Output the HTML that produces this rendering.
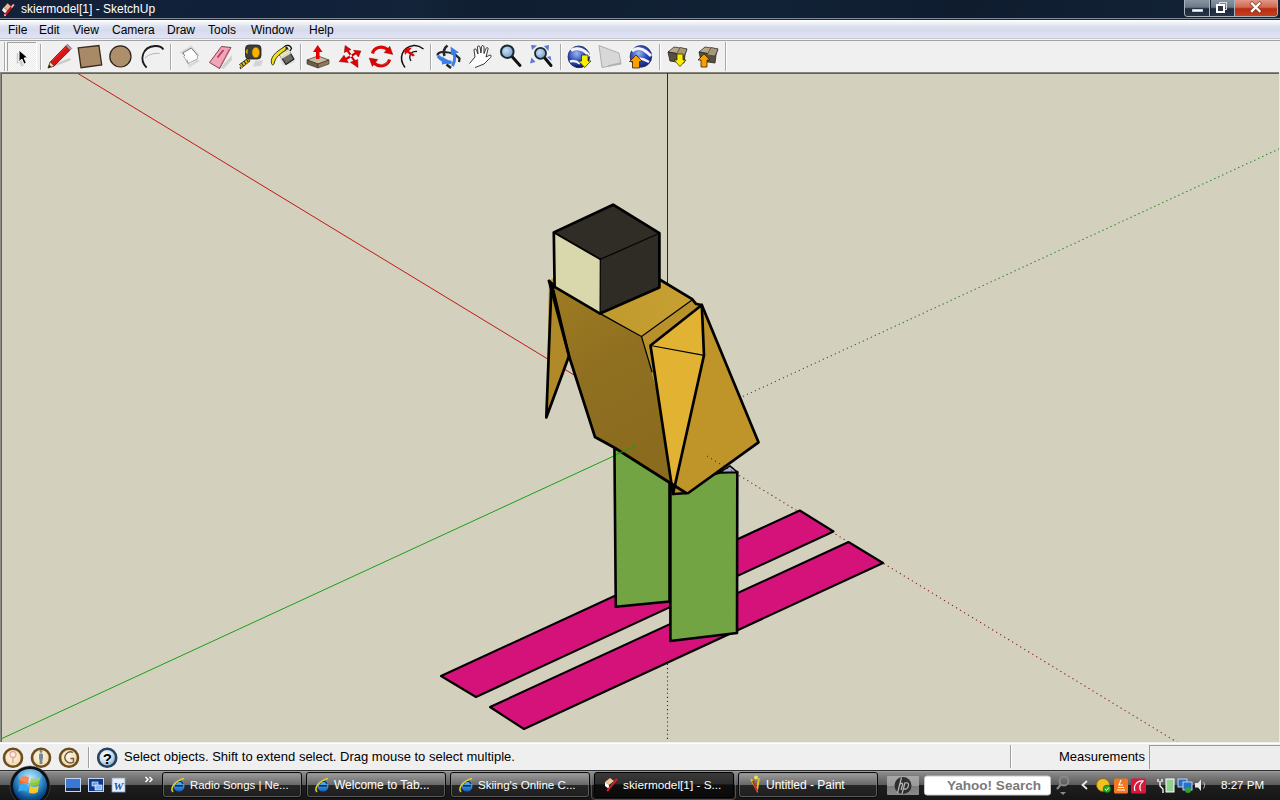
<!DOCTYPE html>
<html><head><meta charset="utf-8">
<style>
*{margin:0;padding:0;box-sizing:border-box}
html,body{width:1280px;height:800px;overflow:hidden;background:#f0f0f0}
body{position:relative;font-family:"Liberation Sans",sans-serif}
.a{position:absolute}
#title{left:0;top:0;width:1280px;height:18px;background:linear-gradient(100deg,#142238 0%,#10203a 20%,#132338 33%,#0f1e30 38%,#122236 60%,#0e1c2e 75%,#142438 100%)}
#tline1{left:0;top:18px;width:1280px;height:1px;background:#7f8b97}
#tline2{left:0;top:19px;width:1280px;height:1px;background:#1e2630}
#menu{left:0;top:20px;width:1280px;height:18px;background:linear-gradient(180deg,#ffffff 0%,#f4f5fa 12%,#dde2ee 35%,#d6dbec 55%,#dcdff2 80%,#e2e3f4 100%)}
#menu span{position:absolute;top:3px;font-size:12px;color:#000;line-height:14px}
#mline1{left:0;top:38px;width:1280px;height:1px;background:#c5c9d2}
#mline2{left:0;top:39px;width:1280px;height:1px;background:#f5f5f5}
#mline3{left:0;top:40px;width:1280px;height:1px;background:#a3a3a3}
#vp{left:0;top:72px;width:1280px;height:670px}
#status{left:0;top:742px;width:1280px;height:28px;background:#efefef}
#taskbar{left:0;top:770px;width:1280px;height:30px;background:linear-gradient(180deg,#2e2e2e 0px,#2e2e2e 1px,#9c9c9c 1px,#9c9c9c 2px,#8c8c8c 2px,#747474 8px,#5c5c5c 14.5px,#1e1e1e 15px,#161616 30px)}
</style></head><body>
<div class="a" id="title">
<svg class="a" style="left:0;top:0" width="18" height="18" viewBox="0 0 18 18">
<polygon points="7.5,3 11.5,6.5 7.5,11 3.5,7.5" fill="#f0b890" stroke="#1a1a1a" stroke-width="0.6"/>
<polygon points="3.5,7.5 7.5,11 5.5,13.8 2,10.2" fill="#f4f4ec"/>
<line x1="5" y1="15" x2="13.8" y2="4.5" stroke="#c81818" stroke-width="2.2"/>
<line x1="11.5" y1="7.5" x2="13.8" y2="4.5" stroke="#f0c8d0" stroke-width="1.4"/>
<circle cx="5" cy="15.2" r="1.1" fill="#f090b0"/>
</svg>
<span class="a" style="left:21px;top:2px;font-size:12px;line-height:14px;color:#fff;white-space:nowrap">skiermodel[1] - SketchUp</span>
<div class="a" style="left:1184px;top:0;width:94px;height:17px;border:1px solid #aab4c0;border-top:none;border-radius:0 0 4px 4px;overflow:hidden">
 <div class="a" style="left:0;top:0;width:25px;height:16px;background:linear-gradient(180deg,#8a95a3 0%,#6c7888 45%,#1c2a3a 55%,#26354a 100%);border-right:1px solid #aab4c0"></div>
 <div class="a" style="left:7px;top:9px;width:11px;height:3px;background:#fff;border:1px solid #c0c8d0"></div>
 <div class="a" style="left:26px;top:0;width:24px;height:16px;background:linear-gradient(180deg,#8a95a3 0%,#6c7888 45%,#1c2a3a 55%,#26354a 100%);border-right:1px solid #aab4c0"></div>
 <div class="a" style="left:34px;top:2px;width:8px;height:8px;border:1.5px solid #d8dce0"></div>
 <div class="a" style="left:31px;top:4px;width:9px;height:9px;border:2.5px solid #fff;background:#2a3440"></div>
 <div class="a" style="left:50px;top:0;width:44px;height:16px;background:linear-gradient(180deg,#e09888 0%,#d06850 45%,#b82c10 55%,#c84020 100%)"></div>
 <svg class="a" style="left:64px;top:1px" width="14" height="12" viewBox="0 0 14 12"><path d="M3,2.5 L10.5,10 M10.5,2.5 L3,10" stroke="#7a3020" stroke-width="3.6" stroke-linecap="square"/><path d="M3,2.5 L10.5,10 M10.5,2.5 L3,10" stroke="#fff" stroke-width="2.4" stroke-linecap="square"/></svg>
</div>
</div>
<div class="a" id="tline1"></div>
<div class="a" id="tline2"></div>
<div class="a" id="menu">
<span style="left:8px">File</span>
<span style="left:39px">Edit</span>
<span style="left:73px">View</span>
<span style="left:112px">Camera</span>
<span style="left:167px">Draw</span>
<span style="left:208px">Tools</span>
<span style="left:251px">Window</span>
<span style="left:309px">Help</span>
</div>
<div class="a" id="mline1"></div>
<div class="a" id="mline2"></div>
<div class="a" id="mline3"></div>
<svg class="a" id="toolbar" style="left:0;top:41px" width="1280" height="31" viewBox="0 41 1280 31">
<defs>
<pattern id="chk" width="2" height="2" patternUnits="userSpaceOnUse"><rect width="2" height="2" fill="#fbfbfb"/><rect width="1" height="1" fill="#ececec"/><rect x="1" y="1" width="1" height="1" fill="#ececec"/></pattern>
<radialGradient id="earth" cx="0.4" cy="0.35" r="0.7"><stop offset="0" stop-color="#9ab8f0"/><stop offset="0.5" stop-color="#3050c0"/><stop offset="1" stop-color="#101c70"/></radialGradient>
<radialGradient id="lens" cx="0.4" cy="0.4" r="0.6"><stop offset="0" stop-color="#c8e0f8"/><stop offset="1" stop-color="#7aa0c8"/></radialGradient>
</defs>
<rect x="0" y="41" width="1280" height="31" fill="#f0f0f0"/>
<rect x="4" y="42" width="1" height="29" fill="#a8a8a8"/>
<rect x="5" y="42" width="1" height="29" fill="#fff"/>
<!-- select pressed -->
<rect x="7" y="42" width="30" height="29" fill="url(#chk)"/>
<rect x="7" y="42" width="30" height="1" fill="#a0a0a0"/>
<rect x="7" y="42" width="1" height="29" fill="#a0a0a0"/>
<rect x="36" y="42" width="1" height="29" fill="#fff"/>
<!-- separators -->
<g fill="#a8a8a8"><rect x="40" y="44" width="1" height="26"/><rect x="170" y="44" width="1" height="26"/><rect x="300" y="44" width="1" height="26"/><rect x="430" y="44" width="1" height="26"/><rect x="560" y="44" width="1" height="26"/><rect x="659" y="44" width="1" height="26"/><rect x="725" y="42" width="1" height="29"/></g>
<g fill="#fff"><rect x="41" y="44" width="1" height="26"/><rect x="171" y="44" width="1" height="26"/><rect x="301" y="44" width="1" height="26"/><rect x="431" y="44" width="1" height="26"/><rect x="561" y="44" width="1" height="26"/><rect x="660" y="44" width="1" height="26"/><rect x="726" y="42" width="1" height="29"/></g>
<!-- cursor -->
<path d="M18,51.5 L18,63 L20.5,61 L22.5,65.5 L25,64.5 L23,60 L26.5,59.5 Z" fill="#888" opacity="0.35" transform="translate(-1.2,1)"/>
<path d="M19,50 L19,61.8 L21.8,59 L24,64.2 L26.4,63.1 L24.2,58 L27.8,57.8 Z" fill="#000" stroke="#fff" stroke-width="1" stroke-linejoin="miter"/>
<!-- pencil -->
<path d="M51,66.5 L69.5,59.5" stroke="#a8a8a8" stroke-width="2.2" opacity="0.55" stroke-linecap="round"/>
<path d="M48,68 L50.2,62 L65.8,46 L70,50.2 L54,66 Z" fill="#d81414" stroke="#5a0000" stroke-width="0.7"/>
<path d="M52,61 L66.5,47" stroke="#ff5050" stroke-width="0.8" opacity="0.7"/>
<path d="M48,68 L50.2,62 L54,66 Z" fill="#ecd8a8" stroke="#5a4020" stroke-width="0.5"/>
<path d="M48,68 L49.2,64.8 L51.2,66.8 Z" fill="#111"/>
<path d="M65.8,46 L67.5,44.3 L71.7,48.5 L70,50.2 Z" fill="#c890a8" stroke="#604050" stroke-width="0.6"/>
<!-- rectangle -->
<polygon points="78.2,47.8 98.9,45.5 101.7,65 81,67.7" fill="#a88a68" stroke="#3a2a1a" stroke-width="1.3"/>
<!-- circle -->
<circle cx="120.4" cy="56.4" r="10.6" fill="#ae8f6c" stroke="#2e2216" stroke-width="1.2"/>
<!-- arc -->
<path d="M146.6,67.7 C139,60 142,47 155,46 C159,45.8 162,47 163.4,49.5" fill="none" stroke="#1a1a1a" stroke-width="1.8"/>
<path d="M145,58 C149,54 155,53 159.5,53.5" fill="none" stroke="#9a9a9a" stroke-width="0.7"/>
<!-- make component (box) -->
<g fill="none" stroke="#c8c8c8" stroke-width="2.2" opacity="0.6"><polygon points="181.5,52.5 191.3,47 198,55 187.5,61 189.5,66 197.5,61"/></g>
<polygon points="182.9,52.8 191.3,48.1 197.4,55.1 187.1,59.8" fill="#fff" stroke="#6a6a6a" stroke-width="0.9"/>
<polyline points="183.5,56 188,63.5 197.5,59 197.4,55.1" fill="#fafafa" stroke="#9a9a9a" stroke-width="0.8"/>
<line x1="187.1" y1="59.8" x2="188" y2="63.5" stroke="#8a8a8a" stroke-width="0.8"/>
<!-- eraser -->
<polygon points="221,67.5 231.5,55 232,60 223.5,69" fill="#a8a8a8" opacity="0.45"/>
<polygon points="209.5,62.5 221.5,46.5 231,47.5 219.5,68.5" fill="#f2a4b8" stroke="#7a3048" stroke-width="0.9" stroke-linejoin="round"/>
<line x1="229.5" y1="49" x2="219.5" y2="68.5" stroke="#8a3a50" stroke-width="1"/>
<polygon points="229.5,49 231,47.5 219.5,68.5 220,66" fill="#c87890"/>
<path d="M217.5,57.5 L223.5,50" stroke="#b03858" stroke-width="1.6"/>
<!-- tape -->
<polygon points="255,61 263,60 261,66 253,66.5" fill="#b8b8b8" opacity="0.5"/>
<polygon points="239.5,64.5 248,58 250,61 242,67.5" fill="#e8c000" stroke="#222" stroke-width="0.8"/>
<path d="M241.5,63 L243.5,66 M244,61 L246,64 M246.5,59.2 L248.3,62" stroke="#222" stroke-width="1.1"/>
<path d="M240,67 L241,69" stroke="#222" stroke-width="1.3"/>
<rect x="245.5" y="45" width="15.5" height="14" rx="3.5" fill="#3c3e3c" stroke="#1a1a1a" stroke-width="0.8"/>
<ellipse cx="255.8" cy="52.5" rx="3.8" ry="5.2" fill="#f8b400" stroke="#8a6000" stroke-width="0.6"/>
<path d="M247.5,48.5 C245,50 245,53 247.5,54.5" fill="#e8c000" stroke="#222" stroke-width="0.6"/>
<!-- paint bucket -->
<polygon points="283,66 295,62 292,55 280,59" fill="#c0c0b8" opacity="0.45"/>
<path d="M278,52.5 L287,47.5 L294,59 L286,64.5 Z" fill="#6a6a66" stroke="#1e1e1e" stroke-width="1.1"/>
<path d="M279,54 L288.5,49 L291,53.5 L281.5,59 Z" fill="#ddd8b8"/>
<path d="M281,56 L290,51" stroke="#f4f0d8" stroke-width="0.9"/>
<path d="M283.5,49.5 C284,45 290,43.5 291.5,48.5 L290,51" fill="none" stroke="#111" stroke-width="1.3"/>
<path d="M286,45.5 L278,51 C273,55 270.5,59 271.5,63.5 C272.5,66 274,65 274.5,62 C276,57 280,53.5 286,50 Z" fill="#f0e010" stroke="#222" stroke-width="0.9"/>
<!-- push pull -->
<polygon points="307,60 318,56 329,60 318,64" fill="#c8bca0" stroke="#4a3c2c" stroke-width="0.8"/>
<polygon points="307,60 318,64 318,68 307,64" fill="#6e5e48" stroke="#3a2c1c" stroke-width="0.6"/>
<polygon points="318,64 329,60 329,64 318,68" fill="#8a7a60" stroke="#3a2c1c" stroke-width="0.6"/>
<polygon points="317.7,45 322.5,52 319.5,52 319.5,59 316,59 316,52 313,52" fill="#e00000"/>
<!-- move -->
<g fill="#e80000" stroke="#700" stroke-width="0.5" stroke-linejoin="round">
<polygon points="345.1,45.5 344.4,52.5 351,49.6"/>
<polygon points="360.9,51 353.5,50.3 358.4,57"/>
<polygon points="339.2,61.6 344,55.3 348.3,62.6"/>
<polygon points="358,67.5 350.4,62.3 357.7,59.5"/>
</g>
<g stroke="#d00000" stroke-width="2.2">
<line x1="347.5" y1="50.5" x2="354.5" y2="61"/>
<line x1="356" y1="53" x2="346" y2="59"/>
</g>
<circle cx="350.8" cy="55.8" r="1.2" fill="#fff"/>
<!-- rotate -->
<path d="M372.5,53.5 C374,47.5 382,45 387.5,49.5" fill="none" stroke="#d80808" stroke-width="3.2"/>
<polygon points="389.8,46.2 392.8,54.4 384.2,52.6" fill="#e00000" stroke="#700" stroke-width="0.4"/>
<path d="M389.6,59.5 C388,65.5 380,68 374.5,63.5" fill="none" stroke="#d80808" stroke-width="3.2"/>
<polygon points="369.2,58 377.8,59.5 372.3,66.4" fill="#e00000" stroke="#700" stroke-width="0.4"/>
<path d="M376,62 C380,65 384,65 388,62" fill="none" stroke="#b0a8a0" stroke-width="0.8" opacity="0.6"/>
<!-- follow me -->
<path d="M405,67.5 C398,58 402,47 414,45.5 C418,45.2 421,47 423.5,49" fill="none" stroke="#111" stroke-width="1.5"/>
<path d="M411,61 C408,56 411,51 417,51.5" fill="none" stroke="#111" stroke-width="1.3"/>
<polygon points="404,49 412,47.5 409,51 415,55 413,56.5 407,52.5 405,55" fill="#e00000"/>
<!-- orbit -->
<path d="M437.5,55.5 C437,51 447,51 455,54.5 L459.5,58.5 L459,62" fill="none" stroke="#1c2230" stroke-width="2.2"/>
<path d="M447.5,45.5 C443.5,48.5 443.5,53 444.5,56" fill="none" stroke="#2a2a2a" stroke-width="2.6"/>
<path d="M438,56 C441,60 446,62 451.5,62.5" fill="none" stroke="#3a7ee8" stroke-width="3.4"/>
<polygon points="441.5,56.5 452.5,62.5 442,64.5" fill="#3a7ee8"/>
<path d="M452,50 C455.5,54 455.5,60.5 452.5,66" fill="none" stroke="#3a7ee8" stroke-width="3"/>
<polygon points="450.5,46.5 459,52.5 451,54.5" fill="#3a7ee8"/>
<path d="M446.5,64.5 L451,68" fill="none" stroke="#222" stroke-width="2.6"/>
<!-- hand -->
<path d="M469.5,63.5 L475,57 L474,50 C474,48.5 476,48.5 476.5,50 L478,54 L477.5,47 C477.5,45.5 479.5,45.5 480,47 L481,53 L481.5,46.5 C482,45 484,45.5 484,47 L484,53.5 L486,48.5 C486.5,47 488.5,47.5 488,49 L486,57 L490,55 C491.5,55 491.5,56.5 490.5,57.5 L484,64 L475,67.5" fill="#fff" stroke="#222" stroke-width="0.9" stroke-linejoin="round"/>
<!-- zoom -->
<line x1="511.5" y1="56" x2="520" y2="65.5" stroke="#111" stroke-width="3" stroke-linecap="round"/>
<circle cx="507.3" cy="51.7" r="6.3" fill="url(#lens)" stroke="#1a2a30" stroke-width="2"/>
<!-- zoom extents -->
<line x1="544" y1="57" x2="551" y2="65.5" stroke="#111" stroke-width="3" stroke-linecap="round"/>
<circle cx="540.5" cy="53.3" r="5.5" fill="url(#lens)" stroke="#1a2a30" stroke-width="1.8"/>
<g fill="#5a7ad8">
<polygon points="531,45 537,45.5 532,50"/>
<polygon points="549,45 548.5,51 544,46"/>
<polygon points="530,63.5 531.5,57.5 535.5,62"/>
<polygon points="551.5,61 547,57 550.5,56"/>
</g>
<!-- earth get -->
<circle cx="578.8" cy="56.8" r="10.8" fill="url(#earth)" stroke="#2a2a50" stroke-width="0.8"/>
<path d="M571,50.5 C575,47.5 581,48.5 585,51.5 C587,53 588.5,55 589,56.5" fill="none" stroke="#f4f4ff" stroke-width="3"/>
<path d="M570,61.5 C573,60.5 577,61.5 580,63.5" fill="none" stroke="#f0f0ff" stroke-width="2.4"/>
<path d="M575,66 C578,67 581,67 583,66.5" fill="none" stroke="#101860" stroke-width="1.5"/>
<polygon points="581.5,55 588,55 588,61 591,61 584.7,67.5 578.5,61 581.5,61" fill="#f8f000" stroke="#303000" stroke-width="0.8"/>
<!-- terrain (disabled) -->
<polygon points="599,45.5 619,53 621,64 602,67.5" fill="#d8d8d8" stroke="#a8a8a8" stroke-width="0.9"/>
<path d="M608,66 L621,63" stroke="#b0b0b0" stroke-width="1.5"/>
<!-- earth place -->
<circle cx="640.9" cy="56.4" r="10.8" fill="url(#earth)" stroke="#2a2a50" stroke-width="0.8"/>
<path d="M632,51 C636,47.5 642,48 646,51.5 C648,53 650,55 651,56" fill="none" stroke="#f4f4ff" stroke-width="3"/>
<path d="M637,59 C641,58 645,59.5 649,62" fill="none" stroke="#f0f0ff" stroke-width="2.4"/>
<polygon points="636,55 642.5,61.5 639.5,61.5 639.5,68 632.5,68 632.5,61.5 629.5,61.5" fill="#f8a000" stroke="#402000" stroke-width="0.8"/>
<!-- warehouse get -->
<polygon points="668,52 674,47 687,49 685,55" fill="#b8a888" stroke="#333" stroke-width="0.8"/>
<polygon points="668,52 685,55 684,63 670,61" fill="#5a5040" stroke="#222" stroke-width="0.8"/>
<polygon points="676,55 680,47.5 687,49 684,56" fill="#a89878" stroke="#333" stroke-width="0.6"/>
<polygon points="677,54 683,54 683,60 686,60 680,66.5 674,60 677,60" fill="#f8f000" stroke="#303000" stroke-width="0.8"/>
<!-- share -->
<polygon points="699,52 705,47 718,49 716,55" fill="#b8a888" stroke="#333" stroke-width="0.8"/>
<polygon points="699,52 716,55 715,63 701,61" fill="#5a5040" stroke="#222" stroke-width="0.8"/>
<polygon points="707,55 711,47.5 718,49 715,56" fill="#a89878" stroke="#333" stroke-width="0.6"/>
<polygon points="704,54 710,60 707,60 707,67 701,67 701,60 698,60" fill="#f8a000" stroke="#402000" stroke-width="0.8"/>
</svg>

<svg class="a" style="left:0;top:0" width="1280" height="800" viewBox="0 0 1280 800">
<defs><clipPath id="vpc"><rect x="1" y="73" width="1278" height="669"/></clipPath></defs>
<rect x="0" y="72" width="1280" height="670" fill="#d3d1bd"/>
<rect x="0" y="72" width="1280" height="1" fill="#84847c"/>
<rect x="0" y="73" width="1280" height="1" fill="#64645c"/>
<rect x="0" y="72" width="1" height="670" fill="#8c8c88"/>
<rect x="1" y="73" width="1" height="669" fill="#60605a"/>
<rect x="1279" y="72" width="1" height="670" fill="#e8e8e4"/>
<g clip-path="url(#vpc)">
<!-- axes -->
<line x1="78" y1="73.5" x2="667" y2="431.5" stroke="#c01818" stroke-width="1"/>
<line x1="667" y1="431.5" x2="1180" y2="744" stroke="#8a1a14" stroke-width="1.1" stroke-dasharray="1.2 3.5"/>
<line x1="667.5" y1="73" x2="667.5" y2="431.5" stroke="#1c1c9a" stroke-width="1"/>
<line x1="667.5" y1="664" x2="667.5" y2="742" stroke="#20204a" stroke-width="1.1" stroke-dasharray="1.1 3"/>
<line x1="0" y1="739.4" x2="667" y2="431.5" stroke="#18a018" stroke-width="1"/>
<line x1="667" y1="431.5" x2="1280" y2="148.5" stroke="#14781a" stroke-width="1.1" stroke-dasharray="1.2 3.2"/>
</g>
<g clip-path="url(#vpc)">
<!-- skis -->
<g stroke="#000" stroke-linejoin="round" stroke-linecap="round">
<polygon points="441,676 799.8,510.5 833.5,531.5 476,697" fill="#d5117a" stroke-width="2.1"/>
<polygon points="490,707 848.5,542 883,563 524,729" fill="#d5117a" stroke-width="2.1"/>
<!-- legs -->
<polygon points="614.4,445 669.5,470 669.5,601.5 615.8,606.8" fill="#72a443" stroke-width="2.6"/>
<polygon points="670.4,486 720,472.4 737.3,472 737,633 670.4,641" fill="#72a443" stroke-width="2.6"/>
<polygon points="720,472.4 729.9,465.9 737.3,472" fill="#a9a8c6" stroke-width="1.5"/>
</g>
<g stroke="none">
<polygon points="549,281 551.5,283 569,356 546.3,417.5" fill="#b08a28"/>
<linearGradient id="lff" gradientUnits="userSpaceOnUse" x1="560" y1="290" x2="650" y2="450"><stop offset="0" stop-color="#9d7b23"/><stop offset="0.5" stop-color="#8f6f20"/><stop offset="1" stop-color="#8b6b1e"/></linearGradient>
<polygon points="549,281 641.5,336.5 686,493 615,448 595,437 569,356" fill="url(#lff)"/>
<linearGradient id="topf" gradientUnits="userSpaceOnUse" x1="600" y1="320" x2="690" y2="290"><stop offset="0" stop-color="#c09a2e"/><stop offset="1" stop-color="#c8a032"/></linearGradient>
<polygon points="549,281 600,244 660,279.5 692.5,299.5 641.5,336.5" fill="url(#topf)"/>
<polygon points="641.5,336.5 692.5,299.5 701.8,305 650.5,345.5 673,494 686,493" fill="#b8912a"/>
<polygon points="701.8,305 758.5,442.3 688.3,493 673,494" fill="#bf9429"/>
<polygon points="701.6,305 650.5,345.5 673,494 704,355.3" fill="#e2b332"/>
<polygon points="613.1,204.7 659.4,233.2 600.3,259.3 553.8,232.4" fill="#302c26"/>
<polygon points="553.8,232.4 600.3,259.3 600.1,313.6 554.6,286.8" fill="#d9d8ac"/>
<polygon points="600.3,259.3 659.4,233.2 659.4,287.6 600.1,313.6" fill="#2f2b25"/>
</g>
<g stroke="#000" fill="none" stroke-linejoin="round" stroke-linecap="round">
<g stroke-width="1.2">
<polyline points="553.8,232.4 600.3,259.3" stroke-width="1.8"/>
<polyline points="600.3,259.3 659.4,233.2"/>
<line x1="600.3" y1="259.3" x2="600.1" y2="313.6"/>
<line x1="600.1" y1="313.6" x2="641.5" y2="336.5"/>
<line x1="641.5" y1="336.5" x2="692" y2="300"/>
<line x1="641.5" y1="336.5" x2="652" y2="372"/>
<line x1="650.5" y1="345.5" x2="704" y2="355.3"/>
</g>
<g stroke-width="2.7">
<polygon points="613.1,204.7 659.4,233.2 659.4,287.6 600.1,313.6 554.6,286.8 553.8,232.4"/>
<polygon points="551.5,283 546.3,417.5 569,356"/>
<polyline points="549,281 554.6,286.8"/>
<polyline points="549,281 569,356 595,437 615,448 686,493"/>
<polyline points="659.6,279.5 692.2,299.2 696,304 701.8,305"/>
<polygon points="701.8,305 650.5,345.5 673,494 704,355.3"/>
<polyline points="701.8,305 758.5,442.3 688.3,493 673,494"/>
</g>
</g>
<line x1="616" y1="454.6" x2="637" y2="445.3" stroke="#14a014" stroke-width="1"/>
<line x1="707" y1="456" x2="736" y2="473.7" stroke="#5a1a10" stroke-width="1" stroke-dasharray="1.2 3.5"/>
</g>
</svg>

<div class="a" id="status">
<div class="a" style="left:0;top:1px;width:1280px;height:1px;background:#fff"></div>
<svg class="a" style="left:0;top:0" width="130" height="28" viewBox="0 742 130 28">
<defs><radialGradient id="pch" cx="0.45" cy="0.4" r="0.6"><stop offset="0" stop-color="#fff6e6"/><stop offset="1" stop-color="#f2d6a6"/></radialGradient>
<radialGradient id="qg" cx="0.4" cy="0.35" r="0.65"><stop offset="0" stop-color="#ffffff"/><stop offset="0.6" stop-color="#c8dcf0"/><stop offset="1" stop-color="#8aa8c8"/></radialGradient></defs>
<g stroke="#6c4e1e" stroke-width="2.6" fill="url(#pch)">
<circle cx="13" cy="757.8" r="9"/><circle cx="41" cy="757.8" r="9"/><circle cx="69" cy="757.8" r="9"/>
</g>
<circle cx="13" cy="754.5" r="3" fill="none" stroke="#e8a8a8" stroke-width="1.3"/>
<line x1="13" y1="757.5" x2="13" y2="763" stroke="#b8b0a0" stroke-width="1.3"/>
<circle cx="41" cy="751.5" r="1.4" fill="#708898"/>
<rect x="39" y="753.5" width="4" height="6" rx="1" fill="#708898"/>
<rect x="39.6" y="759" width="2.8" height="5" fill="#708898"/>
<path d="M73,752.5 A5.5,5.5 0 1 0 73.5,762 L73.5,758.5 L70.5,758.5" fill="none" stroke="#6a5a40" stroke-width="1.4"/>
<rect x="88" y="747" width="1" height="21" fill="#a0a0a0"/>
<rect x="89" y="747" width="1" height="21" fill="#fff"/>
<circle cx="107.2" cy="757.8" r="9" fill="url(#qg)" stroke="#26425e" stroke-width="2.6"/>
<text x="107.4" y="763.5" text-anchor="middle" font-family="Liberation Sans" font-weight="bold" font-size="15" fill="#000">?</text>
</svg>
<span class="a" style="left:124px;top:7px;font-size:13px;line-height:15px;color:#000;white-space:nowrap">Select objects. Shift to extend select. Drag mouse to select multiple.</span>
<div class="a" style="left:1010px;top:3px;width:1px;height:23px;background:#a0a0a0"></div>
<div class="a" style="left:1011px;top:3px;width:1px;height:23px;background:#fff"></div>
<span class="a" style="left:1059px;top:7px;font-size:13px;line-height:15px;color:#000;white-space:nowrap">Measurements</span>
<div class="a" style="left:1149px;top:3px;width:131px;height:24px;background:#ededed;border-left:1px solid #9a9a9a;border-top:1px solid #9a9a9a"></div>
</div>
<div class="a" id="taskbar">
<svg class="a" style="left:0;top:0" width="1280" height="30" viewBox="0 770 1280 30">
<defs>
<radialGradient id="orb" cx="0.5" cy="0.35" r="0.65"><stop offset="0" stop-color="#a8d8f0"/><stop offset="0.45" stop-color="#2a88c8"/><stop offset="0.8" stop-color="#0a4a80"/><stop offset="1" stop-color="#1a2030"/></radialGradient>
<linearGradient id="btn" x1="0" y1="0" x2="0" y2="1"><stop offset="0" stop-color="#a0a0a0"/><stop offset="0.48" stop-color="#6a6a6a"/><stop offset="0.5" stop-color="#262626"/><stop offset="1" stop-color="#1e1e1e"/></linearGradient>
<linearGradient id="btna" x1="0" y1="0" x2="0" y2="1"><stop offset="0" stop-color="#3a3a3a"/><stop offset="0.45" stop-color="#2c2c2c"/><stop offset="0.5" stop-color="#0e0e0e"/><stop offset="1" stop-color="#0a0a0a"/></linearGradient>
<linearGradient id="ie" x1="0" y1="0" x2="0" y2="1"><stop offset="0" stop-color="#60c8f8"/><stop offset="1" stop-color="#1060c0"/></linearGradient>

</defs>
<!-- quick launch -->
<rect x="65.5" y="778.5" width="15" height="13" fill="#3a78d8" stroke="#c8d8f0" stroke-width="1"/>
<rect x="66" y="788" width="14" height="3" fill="#1a2a4a"/>
<rect x="88.5" y="778.5" width="15" height="13" fill="#0a3a90" stroke="#c8d8f0" stroke-width="1"/>
<rect x="92" y="782" width="6" height="4" fill="#6a9ae0" stroke="#fff" stroke-width="0.6"/>
<rect x="95" y="785" width="7" height="5" fill="#8ab8f0" stroke="#fff" stroke-width="0.6"/>
<rect x="112" y="778" width="13" height="14" fill="#e8eef8" stroke="#8aa0c8" stroke-width="0.8"/>
<text x="113.5" y="789.5" font-family="Liberation Serif" font-style="italic" font-weight="bold" font-size="11" fill="#2050a8">W</text>
<path d="M145.5,777 L148,779.5 L145.5,782 M149.5,777 L152,779.5 L149.5,782" fill="none" stroke="#fff" stroke-width="1.5"/>
<!-- buttons -->
<g stroke-width="1">
<rect x="162.5" y="772.5" width="139" height="25" rx="2.5" fill="url(#btn)" stroke="#0a0a0a"/>
<rect x="163.5" y="773.5" width="137" height="23" rx="2" fill="none" stroke="#8a8a8a" stroke-opacity="0.55"/>
<rect x="306.5" y="772.5" width="139" height="25" rx="2.5" fill="url(#btn)" stroke="#0a0a0a"/>
<rect x="307.5" y="773.5" width="137" height="23" rx="2" fill="none" stroke="#8a8a8a" stroke-opacity="0.55"/>
<rect x="450.5" y="772.5" width="139" height="25" rx="2.5" fill="url(#btn)" stroke="#0a0a0a"/>
<rect x="451.5" y="773.5" width="137" height="23" rx="2" fill="none" stroke="#8a8a8a" stroke-opacity="0.55"/>
<rect x="591.5" y="771.5" width="144" height="28" rx="3" fill="none" stroke="#8a8a8a" stroke-opacity="0.5"/>
<rect x="594.5" y="772.5" width="139" height="25" rx="2.5" fill="url(#btna)" stroke="#000"/>
<rect x="738.5" y="772.5" width="139" height="25" rx="2.5" fill="url(#btn)" stroke="#0a0a0a"/>
<rect x="739.5" y="773.5" width="137" height="23" rx="2" fill="none" stroke="#8a8a8a" stroke-opacity="0.55"/>
</g>
<g transform="translate(170,777)">
<circle cx="9" cy="9" r="5.5" fill="url(#ie)"/>
<rect x="5" y="8" width="8" height="1.6" fill="#0a2a60"/>
<path d="M13,7 A4,4 0 0 0 5.5,7" fill="none" stroke="#0a2a60" stroke-width="1.2"/>
<path d="M3,15 C0,12 4,4 14,1.5" fill="none" stroke="#e8c820" stroke-width="1.6"/>
</g>
<g transform="translate(314,777)">
<circle cx="9" cy="9" r="5.5" fill="url(#ie)"/>
<rect x="5" y="8" width="8" height="1.6" fill="#0a2a60"/>
<path d="M13,7 A4,4 0 0 0 5.5,7" fill="none" stroke="#0a2a60" stroke-width="1.2"/>
<path d="M3,15 C0,12 4,4 14,1.5" fill="none" stroke="#e8c820" stroke-width="1.6"/>
</g>
<g transform="translate(458,777)">
<circle cx="9" cy="9" r="5.5" fill="url(#ie)"/>
<rect x="5" y="8" width="8" height="1.6" fill="#0a2a60"/>
<path d="M13,7 A4,4 0 0 0 5.5,7" fill="none" stroke="#0a2a60" stroke-width="1.2"/>
<path d="M3,15 C0,12 4,4 14,1.5" fill="none" stroke="#e8c820" stroke-width="1.6"/>
</g>
<!-- sketchup icon -->
<polygon points="605,782 610,778 614,781 609,785" fill="#f0c8a0"/>
<polygon points="605,782 609,785 609,789 605,786" fill="#fff"/>
<line x1="607" y1="791" x2="617" y2="779" stroke="#d02020" stroke-width="2"/>
<!-- paint icon -->
<path d="M751,779 L757,790 L759,778" fill="none" stroke="#e0c020" stroke-width="2"/>
<path d="M753,781 L757,791" stroke="#d02020" stroke-width="2"/>
<circle cx="756" cy="777.5" r="2" fill="#f0e060"/>
<!-- hp -->
<linearGradient id="hpg" x1="0" y1="0" x2="0" y2="1"><stop offset="0" stop-color="#a8a8a8"/><stop offset="0.5" stop-color="#9a9a9a"/><stop offset="0.52" stop-color="#7c7c7c"/><stop offset="1" stop-color="#8a8a8a"/></linearGradient>
<rect x="887" y="776" width="32" height="19" rx="1" fill="url(#hpg)"/>
<circle cx="903" cy="785.5" r="8.5" fill="#2e2e2e"/>
<path d="M901.5,777.5 L897.5,793 M899.5,785 C901,782.5 903,782.5 902.5,785 L901,790 M905,782.5 L902,794 M904.5,783.5 C908,781.5 909.5,784 908,787 C907,789.5 904.5,789.5 903.5,788.5" fill="none" stroke="#b8b8b8" stroke-width="1.2"/>
<!-- search -->
<rect x="924.5" y="776" width="126" height="19" rx="2.5" fill="#fff" stroke="#c8c8c8" stroke-width="1"/>
<text x="947" y="790.3" font-family="Liberation Sans" font-weight="bold" font-size="13" fill="#7a7a7a" textLength="94" lengthAdjust="spacingAndGlyphs">Yahoo! Search</text>
<circle cx="1064" cy="781" r="4.5" fill="none" stroke="#8a8a8a" stroke-width="1.8"/>
<line x1="1061" y1="784.5" x2="1057" y2="789" stroke="#8a8a8a" stroke-width="2.2"/>
<polygon points="1060,792 1066,792 1063,795" fill="#8a8a8a"/>
<path d="M1087,781 L1082.5,785 L1087,789" fill="none" stroke="#e8e8e8" stroke-width="1.8"/>
<!-- tray icons -->
<circle cx="1103" cy="785" r="6.5" fill="#f0c020" stroke="#8a6010" stroke-width="0.8"/>
<circle cx="1107" cy="789" r="3.8" fill="#20b020" stroke="#0a500a" stroke-width="0.6"/>
<path d="M1105,789 L1106.5,790.5 L1109,787.5" fill="none" stroke="#fff" stroke-width="1"/>
<rect x="1114" y="778.5" width="14" height="15" rx="1.5" fill="#f07820"/>
<path d="M1117,790 L1125,790 M1118,787.5 L1124,787.5 M1121,780 L1119,785 L1123,785" fill="none" stroke="#fff" stroke-width="1.1"/>
<rect x="1131" y="778.5" width="15" height="15" rx="1.5" fill="#d81838"/>
<path d="M1135,791 C1133,786 1137,780 1143,781 C1140,784 1139,788 1141,791" fill="none" stroke="#fff" stroke-width="1.2"/>
<rect x="1166" y="779" width="8" height="13" fill="#90d090" stroke="#fff" stroke-width="1"/>
<path d="M1160,781 L1160,786 L1163,789 L1163,793 M1162,779 L1162,782 M1158,779 L1158,782" fill="none" stroke="#fff" stroke-width="1.3"/>
<rect x="1178" y="779" width="9" height="8" fill="#2a70c8" stroke="#c8e0f8" stroke-width="0.9"/>
<rect x="1183" y="782" width="9" height="8" fill="#2a70c8" stroke="#c8e0f8" stroke-width="0.9"/>
<circle cx="1188" cy="790" r="3" fill="#30a030"/>
<polygon points="1195,783 1198,783 1201,779.5 1201,791 1198,787.5 1195,787.5" fill="#e8e8e8"/>
<path d="M1203.5,782 C1205,784 1205,786 1203.5,788.5" fill="none" stroke="#c8c8c8" stroke-width="0.9"/>
</svg>
<svg class="a" style="left:0;top:-8px" width="62" height="38" viewBox="0 762 62 38">
<defs>
<radialGradient id="orb2" cx="0.5" cy="0.3" r="0.75"><stop offset="0" stop-color="#c0e8f8"/><stop offset="0.35" stop-color="#4aa8e0"/><stop offset="0.75" stop-color="#0a5090"/><stop offset="1" stop-color="#0a2a50"/></radialGradient>
</defs>
<circle cx="30" cy="786" r="20" fill="#0c1014" stroke="#5a6068" stroke-width="0.8" stroke-opacity="0.6"/>
<circle cx="30" cy="786" r="17" fill="url(#orb2)"/>
<path d="M20.5,777.5 C23.5,775.5 26,776 29,777.5 L28,784 C25,782.5 23,782.5 19.5,784 Z" fill="#f06a28"/>
<path d="M31,778 C34,779.5 36.5,779.5 40,777.5 L39,784 C35.5,786 33,786 30,784.5 Z" fill="#8ac838"/>
<path d="M19.3,785.2 C22.5,783.5 25,783.8 27.8,785.2 L26.8,791.5 C24,790 22,790 18.3,791.5 Z" fill="#38a8f0"/>
<path d="M29.8,786 C33,787.5 35.5,787.5 38.8,785.5 L37.8,792 C34.5,794 32,794 28.8,792.5 Z" fill="#f8c828"/>
<ellipse cx="30" cy="776" rx="12" ry="7" fill="#fff" opacity="0.22"/>
</svg>
<span class="a" style="left:190px;top:8px;font-size:11.4px;line-height:14px;color:#fff;white-space:nowrap">Radio Songs | Ne...</span>
<span class="a" style="left:334px;top:8px;font-size:12px;line-height:14px;color:#fff;white-space:nowrap">Welcome to Tab...</span>
<span class="a" style="left:478px;top:8px;font-size:11.6px;line-height:14px;color:#fff;white-space:nowrap">Skiing's Online C...</span>
<span class="a" style="left:623px;top:8px;font-size:11.8px;line-height:14px;color:#fff;white-space:nowrap">skiermodel[1] - S...</span>
<span class="a" style="left:766px;top:8px;font-size:12px;line-height:14px;color:#fff;white-space:nowrap">Untitled - Paint</span>
<span class="a" style="left:1221px;top:8px;font-size:11.6px;line-height:14px;color:#fff;white-space:nowrap">8:27 PM</span>
</div>
</body></html>
